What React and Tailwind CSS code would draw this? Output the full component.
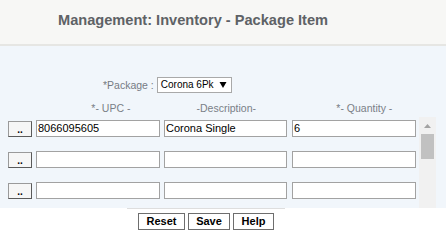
import React from "react";

const font = { fontFamily: '"Liberation Sans", Arial, sans-serif' };

function DotBtn() {
  return (
    <div className="w-[24px] h-[16px] mt-[1px] flex items-end justify-center pb-[1px] bg-[#f6f6f6] border border-t-[#9a9a9a] border-l-[#9a9a9a] border-r-[#5a5a5a] border-b-[#5a5a5a] text-[10px] font-bold leading-[10px] text-black">
      ..
    </div>
  );
}

function Field({ w, ml, value }) {
  return (
    <div
      className={`h-[17px] bg-white border border-[#a2a2a2] flex items-center pl-[1px] text-[11px] text-black leading-none whitespace-nowrap ${w} ${ml}`}
    >
      {value}
    </div>
  );
}

function Row({ upc = "", desc = "", qty = "" }) {
  return (
    <div className="flex h-[17px] shrink-0">
      <div className="ml-[8px]">
        <DotBtn />
      </div>
      <Field w="w-[124px]" ml="ml-[4px]" value={upc} />
      <Field w="w-[123px]" ml="ml-[4px]" value={desc} />
      <Field w="w-[124px]" ml="ml-[5px]" value={qty} />
    </div>
  );
}

export default function App() {
  return (
    <div className="w-[446px] h-[244px] bg-white overflow-hidden" style={font}>
      <div className="h-[46px] bg-[#f7f7f5] border-b-2 border-[#e6e6e3]">
        <div className="pl-[58px] pt-[11px] text-[14.6px] font-bold text-[#5e6266] leading-[18px]">
          Management: Inventory - Package Item
        </div>
      </div>
      <div className="h-[162px] bg-[#f1f6fb] flex flex-col">
        <div className="pt-[31px] flex items-center h-[47px]">
          <div className="ml-[103px] text-[10.5px] text-[#767b83] leading-none whitespace-nowrap">*Package :</div>
          <div className="ml-[3px] w-[75px] h-[16px] bg-white border border-[#a9a9a9] flex items-center justify-between pl-[3px] pr-[4px] text-[10px] text-black leading-none whitespace-nowrap">
            <span>Corona 6Pk</span>
            <svg width="8" height="8" viewBox="0 0 8 8">
              <polygon points="0.5,1 7.5,1 4,7" fill="#000" />
            </svg>
          </div>
        </div>
        <div className="mt-[9px] h-[12px] flex text-[10.5px] text-[#7a7f87] leading-[12px] whitespace-nowrap">
          <div className="ml-[52px] w-[119px] text-center">*- UPC -</div>
          <div className="w-[114px] text-center">-Description-</div>
          <div className="w-[165px] text-center">*- Quantity -</div>
        </div>
        <div className="mt-[3px] flex h-[91px]">
          <div className="w-[419px] flex flex-col gap-[14px] pt-[3px] overflow-hidden">
            <Row upc="8066095605" desc="Corona Single" qty="6" />
            <Row />
            <Row />
          </div>
          <div className="w-[17px] bg-[#f1f1f1] flex flex-col items-center">
            <svg width="9" height="6" viewBox="0 0 9 6" className="mt-[6px]">
              <polygon points="4.5,1 8,5 1,5" fill="#a3a3a3" />
            </svg>
            <div className="mt-[5px] w-[13px] h-[25px] bg-[#c1c1c1]" />
          </div>
        </div>
      </div>
      <div className="ml-[127px] w-[158px] border-t border-[#dedede] flex justify-center gap-[3px] pt-[4px]">
        <div className="w-[47px] h-[17px] border border-[#6e6e6e] bg-white flex items-center justify-center text-[11px] font-bold text-black leading-none">Reset</div>
        <div className="w-[42px] h-[17px] border border-[#6e6e6e] bg-white flex items-center justify-center text-[11px] font-bold text-black leading-none">Save</div>
        <div className="w-[41px] h-[17px] border border-[#6e6e6e] bg-white flex items-center justify-center text-[11px] font-bold text-black leading-none">Help</div>
      </div>
    </div>
  );
}
